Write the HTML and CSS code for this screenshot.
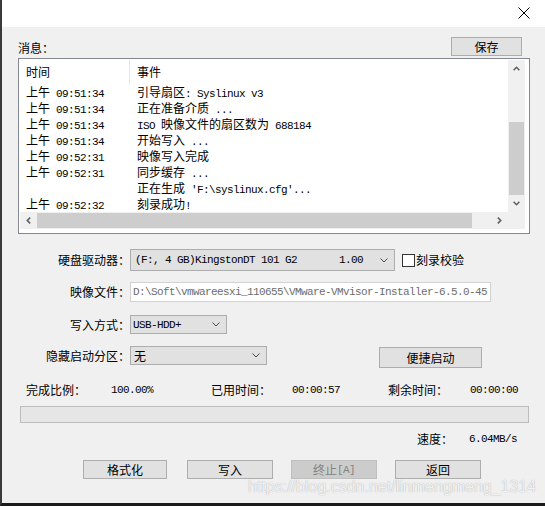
FILE: index.html
```html
<!DOCTYPE html>
<html>
<head>
<meta charset="utf-8">
<link rel="stylesheet" href="styles.css">
</head>
<body>
<div class="window">
  <div class="titlebar">
    <svg class="close" width="12" height="12" viewBox="0 0 12 12"><path d="M0.5 0.5L11.5 11.5M11.5 0.5L0.5 11.5" stroke="#000" stroke-width="1" fill="none"/></svg>
  </div>

  <div class="msg-head">
    <span class="msg-label">消息：</span>
    <div class="btn save">保存</div>
  </div>

  <div class="logbox">
    <div class="list">
      <div class="list-content">
        <div class="row head"><div class="c1 sep">时间</div><div class="c2">事件</div></div>
        <div class="row"><div class="c1">上午<span class="m"> 09:51:34</span></div><div class="c2">引导扇区<span class="m">: Syslinux v3</span></div></div>
        <div class="row"><div class="c1">上午<span class="m"> 09:51:34</span></div><div class="c2">正在准备介质<span class="m"> ...</span></div></div>
        <div class="row"><div class="c1">上午<span class="m"> 09:51:34</span></div><div class="c2"><span class="m">ISO </span>映像文件的扇区数为<span class="m"> 688184</span></div></div>
        <div class="row"><div class="c1">上午<span class="m"> 09:51:34</span></div><div class="c2">开始写入<span class="m"> ...</span></div></div>
        <div class="row"><div class="c1">上午<span class="m"> 09:52:31</span></div><div class="c2">映像写入完成</div></div>
        <div class="row"><div class="c1">上午<span class="m"> 09:52:31</span></div><div class="c2">同步缓存<span class="m"> ...</span></div></div>
        <div class="row"><div class="c1"></div><div class="c2">正在生成<span class="m"> 'F:\syslinux.cfg'...</span></div></div>
        <div class="row"><div class="c1">上午<span class="m"> 09:52:32</span></div><div class="c2">刻录成功<span class="m">!</span></div></div>
      </div>
      <div class="vscroll">
        <div class="sb-btn"><svg width="7" height="5" viewBox="0 0 7 5"><path d="M0.6 4.2L3.5 1.3L6.4 4.2" stroke="#606060" stroke-width="1.6" fill="none"/></svg></div>
        <div class="vtrack"><div class="vthumb"></div></div>
        <div class="sb-btn"><svg width="7" height="5" viewBox="0 0 7 5"><path d="M0.6 0.8L3.5 3.7L6.4 0.8" stroke="#606060" stroke-width="1.6" fill="none"/></svg></div>
      </div>
      <div class="hscroll">
        <div class="sb-btn"><svg width="5" height="7" viewBox="0 0 5 7"><path d="M4.2 0.6L1.3 3.5L4.2 6.4" stroke="#606060" stroke-width="1.6" fill="none"/></svg></div>
        <div class="htrack"><div class="hthumb"></div></div>
        <div class="sb-btn"><svg width="5" height="7" viewBox="0 0 5 7"><path d="M0.8 0.6L3.7 3.5L0.8 6.4" stroke="#606060" stroke-width="1.6" fill="none"/></svg></div>
      </div>
      <div class="corner"></div>
    </div>
  </div>

  <div class="form">
    <div class="frow r1">
      <div class="flabel">硬盘驱动器：</div>
      <div class="combo combo-drive"><span class="m combo-text">(F:, 4 GB)KingstonDT 101 G2       1.00</span><svg class="chev" width="8" height="5" viewBox="0 0 8 5"><path d="M0.5 0.5L4 4L7.5 0.5" stroke="#4a4a4a" stroke-width="1" fill="none"/></svg></div>
      <div class="check"></div>
      <span class="check-label">刻录校验</span>
    </div>
    <div class="frow r2">
      <div class="flabel">映像文件：</div>
      <div class="field"><span class="m">D:\Soft\vmwareesxi_110655\VMware-VMvisor-Installer-6.5.0-45</span></div>
    </div>
    <div class="frow r3">
      <div class="flabel">写入方式：</div>
      <div class="combo combo-mode"><span class="m combo-text">USB-HDD+</span><svg class="chev" width="8" height="5" viewBox="0 0 8 5"><path d="M0.5 0.5L4 4L7.5 0.5" stroke="#4a4a4a" stroke-width="1" fill="none"/></svg></div>
    </div>
    <div class="frow r4">
      <div class="flabel">隐藏启动分区：</div>
      <div class="combo combo-hide"><span class="combo-text">无</span><svg class="chev" width="8" height="5" viewBox="0 0 8 5"><path d="M0.5 0.5L4 4L7.5 0.5" stroke="#4a4a4a" stroke-width="1" fill="none"/></svg></div>
      <div class="btn quick">便捷启动</div>
    </div>
  </div>

  <div class="stats">
    <span class="st w1">完成比例：</span>
    <span class="st w2 m">100.00%</span>
    <span class="st w3">已用时间：</span>
    <span class="st w4 m">00:00:57</span>
    <span class="st w5">剩余时间：</span>
    <span class="st m">00:00:00</span>
  </div>

  <div class="progress"></div>

  <div class="speed">
    <span class="speed-label">速度：</span>
    <span class="m">6.04MB/s</span>
  </div>

  <div class="buttons">
    <div class="btn act first">格式化</div>
    <div class="btn act">写入</div>
    <div class="btn act disabled">终止<span class="m">[A]</span></div>
    <div class="btn act">返回</div>
  </div>

  <div class="watermark">https://blog.csdn.net/linmengmeng_1314</div>
</div>
</body>
</html>
```

FILE: styles.css
```css
* { box-sizing: border-box; margin: 0; padding: 0; }
html, body { width: 545px; height: 506px; overflow: hidden; }
body {
  background: #f0f0f0;
  font-family: "Noto Sans CJK SC", "Microsoft YaHei", sans-serif;
  font-size: 12px;
  line-height: 16px;
  color: #000;
}
.m {
  font-family: "Liberation Mono", monospace;
  font-size: 11px;
  letter-spacing: -0.6px;
  white-space: pre;
}
.window {
  position: relative;
  width: 545px;
  height: 506px;
  border-left: 2px solid #3a3a3a;
  border-bottom: 3px solid #1b1b1b;
  display: flex;
  flex-direction: column;
}
.titlebar {
  height: 27px;
  flex: none;
  background: #fff;
  display: flex;
  justify-content: flex-end;
  align-items: flex-start;
  padding: 7px 15px 0 0;
}
.btn {
  background: #e1e1e1;
  border: 1px solid #adadad;
  display: flex;
  align-items: center;
  justify-content: center;
  white-space: nowrap;
}
.msg-head {
  display: flex;
  justify-content: space-between;
  align-items: center;
  margin: 10px 23px 0 16px;
  height: 19px;
}
.msg-label { padding-top: 3px; }
.save { width: 71px; height: 19px; }

.logbox {
  margin: 2px 0 0 16px;
  width: 512px;
  height: 176px;
  border: 1px solid #828790;
  background: #fff;
  padding: 1px 4px 4px 1px;
}
.list {
  width: 505px;
  height: 169px;
  display: grid;
  grid-template-columns: 488px 17px;
  grid-template-rows: 152px 17px;
}
.list-content { overflow: hidden; }
.row { display: flex; height: 16px; white-space: pre; }
.row.head { height: 24px; align-items: center; }
.c1 { width: 110px; padding-left: 6px; flex: none; }
.c2 { padding-left: 7px; white-space: pre; }
.sep { height: 24px; display: flex; align-items: center; border-right: 1px solid #e5e5e5; }
.vscroll {
  background: #f0f0f0;
  display: flex;
  flex-direction: column;
}
.sb-btn {
  width: 17px;
  height: 17px;
  flex: none;
  display: flex;
  align-items: center;
  justify-content: center;
}
.vtrack { flex: 1; display: flex; flex-direction: column; justify-content: flex-end; padding: 0 1px; }
.vthumb { height: 73px; background: #cdcdcd; }
.hscroll { background: #f0f0f0; display: flex; }
.htrack { flex: 1; display: flex; padding: 1px 0 1px 0; }
.hthumb { width: 435px; background: #cdcdcd; }
.corner { background: #f0f0f0; }

.form { display: flex; flex-direction: column; margin-top: 15px; }
.frow { display: flex; align-items: center; }
.flabel { width: 128px; flex: none; text-align: right; }
.r1 { height: 22px; }
.r2 { height: 20px; margin-top: 11px; }
.r3 { height: 19px; margin-top: 13px; }
.r4 { height: 22px; margin-top: 12px; align-items: flex-start; }
.r4 .flabel { height: 19px; display: flex; align-items: center; justify-content: flex-end; }
.combo {
  background: #e1e1e1;
  border: 1px solid #adadad;
  display: flex;
  align-items: center;
  justify-content: space-between;
  padding: 0 6px 0 2px;
  height: 100%;
}
.combo-drive { width: 265px; height: 22px; padding-left: 4px; }
.combo-mode { width: 97px; height: 19px; }
.combo-hide { width: 137px; height: 19px; padding-left: 3px; }
.chev { flex: none; }
.check {
  width: 13px;
  height: 13px;
  margin-left: 7px;
  border: 1px solid #333;
  background: #fff;
}
.check-label { margin-left: 1px; }
.field {
  width: 361px;
  height: 20px;
  background: #fff;
  border: 1px solid #d2d2d2;
  color: #6d6d6d;
  overflow: hidden;
  white-space: nowrap;
  padding-left: 2px;
  display: flex;
  align-items: center;
}
.quick { width: 103px; height: 21px; margin: 1px 0 0 112px; }

.stats { display: flex; margin: 14px 0 0 24px; height: 16px; }
.st { flex: none; }
.w1 { width: 85px; }
.w2 { width: 100px; }
.w3 { width: 81px; }
.w4 { width: 96px; }
.w5 { width: 82px; }

.progress {
  margin: 8px 0 0 18px;
  width: 509px;
  height: 17px;
  border: 1px solid #bcbcbc;
  background: #e6e6e6;
}
.speed { display: flex; justify-content: flex-end; margin: 8px 28px 0 0; height: 16px; }
.speed-label { width: 52px; }

.buttons { display: flex; gap: 18px; margin: 13px 0 0 81px; }
.act { width: 86px; height: 19px; }
.act.first { width: 84px; margin-right: 2px; }
.disabled { background: #cccccc; border-color: #bfbfbf; color: #838383; }

.watermark {
  position: absolute;
  left: 246px;
  top: 478px;
  font-family: "Liberation Sans", Arial, sans-serif;
  font-size: 16px;
  line-height: 18px;
  color: rgba(255, 255, 255, 0.85);
  text-shadow: 0 0 1px rgba(0, 0, 0, 0.35);
  white-space: nowrap;
}
```
